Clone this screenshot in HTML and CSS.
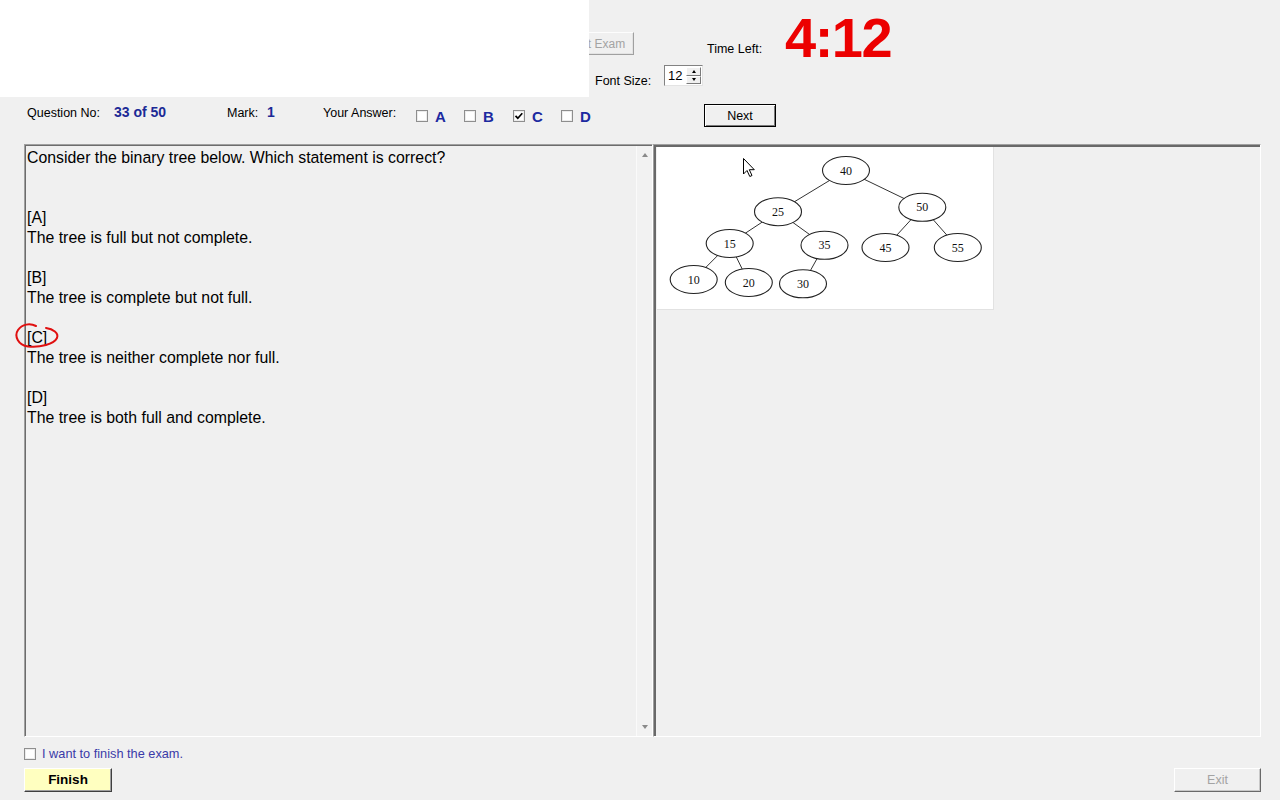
FILE: index.html
```html
<!DOCTYPE html>
<html lang="en">
<head>
<meta charset="utf-8">
<title>Exam</title>
<link rel="stylesheet" href="styles.css">
</head>
<body>
<div class="app">
  <header class="top">
    <div class="blank"></div>
    <div class="col1">
      <div class="clip"><div class="btn start">Start Exam</div></div>
      <div class="fontrow">
        <span class="fs-lbl">Font Size:</span>
        <div class="spin">
          <span class="spin-val">12</span>
          <div class="spin-btns">
            <span class="sbtn"><i class="tri up"></i></span>
            <span class="sbtn"><i class="tri dn"></i></span>
          </div>
        </div>
      </div>
    </div>
    <span class="time-lbl">Time Left:</span>
    <span class="timer">4:12</span>
  </header>

  <div class="info">
    <span class="lbl w-q">Question No:</span>
    <span class="val w-qv">33 of 50</span>
    <span class="lbl w-m">Mark:</span>
    <span class="val w-mv">1</span>
    <span class="lbl w-a">Your Answer:</span>
    <div class="ans w48"><span class="cb"></span><span class="letter">A</span></div>
    <div class="ans w49"><span class="cb"></span><span class="letter">B</span></div>
    <div class="ans w48"><span class="cb"><svg width="10" height="10" viewBox="0 0 10 10"><path d="M1.5 4.8 L3.8 7.2 L8.3 2.2" fill="none" stroke="#000" stroke-width="1.7"/></svg></span><span class="letter">C</span></div>
    <div class="ans w48"><span class="cb"></span><span class="letter">D</span></div>
    <div class="btn next">Next</div>
  </div>

  <main class="main">
    <section class="qpanel">
      <div class="qinner">
        <div class="qtext">
          <div class="line">Consider the binary tree below. Which statement is correct?</div>
          <div class="opt first">
            <div class="line">[A]</div>
            <div class="line">The tree is full but not complete.</div>
          </div>
          <div class="opt">
            <div class="line">[B]</div>
            <div class="line">The tree is complete but not full.</div>
          </div>
          <div class="opt">
            <div class="line"><span class="mark">[C]<svg class="circle" width="52" height="32" viewBox="0 0 52 32"><path d="M24 6 C18 3, 10 4, 6 10 C2 16, 6 25, 16 26.5 C28 28, 42 24, 45 18 C47 13, 41 9, 34 8" fill="none" stroke="#e01010" stroke-width="2" stroke-linecap="round"/></svg></span></div>
            <div class="line">The tree is neither complete nor full.</div>
          </div>
          <div class="opt">
            <div class="line">[D]</div>
            <div class="line">The tree is both full and complete.</div>
          </div>
        </div>
        <div class="vscroll">
          <i class="sarrow up"></i>
          <i class="sarrow dn"></i>
        </div>
      </div>
    </section>
    <section class="rpanel">
      <div class="rinner">
        <div class="figure">
          <svg width="336" height="162" viewBox="0 0 336 162">
            <g stroke="#333" stroke-width="1">
              <line x1="189" y1="23.5" x2="121" y2="64.7"/>
              <line x1="189" y1="23.5" x2="265.3" y2="60.3"/>
              <line x1="121" y1="64.7" x2="72.7" y2="96.5"/>
              <line x1="121" y1="64.7" x2="167.5" y2="98.3"/>
              <line x1="265.3" y1="60.3" x2="228.5" y2="100.5"/>
              <line x1="265.3" y1="60.3" x2="300.8" y2="100.5"/>
              <line x1="72.7" y1="96.5" x2="36.7" y2="132.5"/>
              <line x1="72.7" y1="96.5" x2="91.8" y2="135.5"/>
              <line x1="167.5" y1="98.3" x2="146" y2="136.8"/>
            </g>
            <g fill="#fff" stroke="#222" stroke-width="1.1">
              <ellipse cx="189" cy="23.5" rx="23.5" ry="14"/>
              <ellipse cx="121" cy="64.7" rx="23.5" ry="14"/>
              <ellipse cx="265.3" cy="60.3" rx="23.5" ry="14"/>
              <ellipse cx="72.7" cy="96.5" rx="23.5" ry="14"/>
              <ellipse cx="167.5" cy="98.3" rx="23.5" ry="14"/>
              <ellipse cx="228.5" cy="100.5" rx="23.5" ry="14"/>
              <ellipse cx="300.8" cy="100.5" rx="23.5" ry="14"/>
              <ellipse cx="36.7" cy="132.5" rx="23.5" ry="14"/>
              <ellipse cx="91.8" cy="135.5" rx="23.5" ry="14"/>
              <ellipse cx="146" cy="136.8" rx="23.5" ry="14"/>
            </g>
            <g class="nodes" text-anchor="middle">
              <text x="189" y="27.5">40</text>
              <text x="121" y="68.7">25</text>
              <text x="265.3" y="64.3">50</text>
              <text x="72.7" y="100.5">15</text>
              <text x="167.5" y="102.3">35</text>
              <text x="228.5" y="104.5">45</text>
              <text x="300.8" y="104.5">55</text>
              <text x="36.7" y="136.5">10</text>
              <text x="91.8" y="139.5">20</text>
              <text x="146" y="140.8">30</text>
            </g>
            <path d="M86.5 11.5 L86.5 27 L90 23.5 L92.8 29.5 L95 28.5 L92.3 22.7 L97.3 22.7 Z" fill="#fff" stroke="#000" stroke-width="1" stroke-linejoin="miter"/>
          </svg>
        </div>
      </div>
    </section>
  </main>

  <footer class="bottom">
    <div class="chk-row">
      <span class="cb small"></span>
      <span class="finish-lbl">I want to finish the exam.</span>
    </div>
    <div class="btn-row">
      <div class="btn finish">Finish</div>
      <div class="btn exit">Exit</div>
    </div>
  </footer>
</div>
</body>
</html>
```

FILE: styles.css
```css
* { box-sizing: border-box; }

html, body {
  margin: 0;
  padding: 0;
}

body {
  background: #f0f0f0;
  font-family: "Liberation Sans", Arial, sans-serif;
  font-size: 12.5px;
  color: #000;
  width: 1280px;
  height: 800px;
  overflow: hidden;
}

.app {
  width: 1280px;
  height: 800px;
}

/* ---------- top ---------- */
.top {
  display: flex;
  align-items: flex-start;
  height: 97px;
}

.blank {
  width: 589px;
  height: 97px;
  background: #fff;
  flex-shrink: 0;
}

.col1 {
  width: 114px;
  flex-shrink: 0;
  display: flex;
  flex-direction: column;
  align-items: flex-start;
  padding-top: 32px;
}

.clip {
  width: 45px;
  height: 23px;
  overflow: hidden;
  display: flex;
  justify-content: flex-end;
}

.btn {
  display: flex;
  align-items: center;
  justify-content: center;
  flex-shrink: 0;
  line-height: 14px;
}

.start {
  width: 77px;
  height: 23px;
  color: #a3a3a3;
  font-size: 12px;
  background: #f0f0f0;
  border: 1px solid;
  border-color: #fdfdfd #a0a0a0 #a0a0a0 #fdfdfd;
  box-shadow: inset -1px -1px 0 #e3e3e3;
}

.fontrow {
  display: flex;
  align-items: flex-end;
  margin-top: 10px;
  margin-left: 6px;
}

.fs-lbl {
  width: 69px;
  line-height: 14px;
  margin-bottom: -2px;
}

.spin {
  width: 39px;
  height: 21px;
  background: #fff;
  border: 1px solid;
  border-color: #828282 #e3e3e3 #e3e3e3 #828282;
  display: flex;
  align-items: center;
  justify-content: space-between;
  padding: 1px 1px 1px 3px;
}

.spin-val {
  line-height: 14px;
  font-size: 13px;
}

.spin-btns {
  display: flex;
  flex-direction: column;
  width: 15px;
  height: 17px;
}

.sbtn {
  flex: 1;
  background: #f0f0f0;
  border: 1px solid;
  border-color: #fff #7a7a7a #7a7a7a #fff;
  display: flex;
  align-items: center;
  justify-content: center;
}

.tri {
  display: block;
  width: 0;
  height: 0;
  border-left: 2.5px solid transparent;
  border-right: 2.5px solid transparent;
}
.tri.up { border-bottom: 3px solid #000; }
.tri.dn { border-top: 3px solid #000; }

.time-lbl {
  margin-top: 42px;
  margin-left: 4px;
  width: 56px;
  line-height: 14px;
  white-space: nowrap;
}

.timer {
  margin-top: 10px;
  margin-left: 22px;
  font-size: 56px;
  line-height: 56px;
  font-weight: bold;
  letter-spacing: -1.5px;
  color: #ec0000;
}

/* ---------- info row ---------- */
.info {
  display: flex;
  align-items: flex-start;
  height: 47px;
  padding-left: 27px;
}

.lbl {
  margin-top: 9px;
  line-height: 14px;
  white-space: nowrap;
  flex-shrink: 0;
}

.val {
  margin-top: 8px;
  font-size: 14px;
  line-height: 14px;
  font-weight: bold;
  color: #1c2a96;
  white-space: nowrap;
  flex-shrink: 0;
}

.w-q { width: 87px; }
.w-qv { width: 113px; }
.w-m { width: 40px; }
.w-mv { width: 56px; }
.w-a { width: 93px; }

.ans {
  display: flex;
  align-items: flex-start;
  flex-shrink: 0;
}
.w48 { width: 48px; }
.w49 { width: 49px; }

.cb {
  width: 12px;
  height: 12px;
  margin-top: 13px;
  background: #fff;
  border: 1px solid #8e8e8e;
  box-shadow: inset 0 0 0 1px #ececec;
  display: flex;
  align-items: center;
  justify-content: center;
  flex-shrink: 0;
}

.letter {
  margin-top: 12px;
  margin-left: 7px;
  font-size: 15px;
  line-height: 15px;
  font-weight: bold;
  color: #1c2aa0;
}

.next {
  margin-top: 7px;
  margin-left: 95px;
  width: 72px;
  height: 23px;
  border: 1px solid #000;
  background: #f0f0f0;
  box-shadow: inset 1px 1px 0 #fff, inset -1px -1px 0 #7a7a7a;
}

/* ---------- main panels ---------- */
.main {
  display: flex;
  margin-left: 24px;
  height: 593px;
}

.qpanel {
  width: 629px;
  height: 100%;
  border: 1px solid;
  border-color: #a0a0a0 #fff #fff #a0a0a0;
}

.qinner {
  display: flex;
  height: 100%;
  border-top: 1px solid #6d6d6d;
  border-left: 1px solid #6d6d6d;
}

.qtext {
  flex: 1;
  padding: 2px 0 0 1px;
  font-size: 15.85px;
  line-height: 20px;
}

.line {
  height: 20px;
  white-space: nowrap;
}

.opt { margin-top: 20px; }
.opt.first { margin-top: 40px; }

.mark {
  position: relative;
}

.circle {
  position: absolute;
  left: -15px;
  top: -8.6px;
  pointer-events: none;
}

.vscroll {
  width: 16px;
  border-left: 1px solid #fafafa;
  background: #f2f2f2;
  display: flex;
  flex-direction: column;
  justify-content: space-between;
  align-items: center;
  padding: 7px 0 7px;
}

.sarrow {
  display: block;
  width: 0;
  height: 0;
  border-left: 3.5px solid transparent;
  border-right: 3.5px solid transparent;
}
.sarrow.up { border-bottom: 4px solid #8a8a8a; }
.sarrow.dn { border-top: 4px solid #8a8a8a; }

.rpanel {
  width: 608px;
  height: 100%;
  border: 1px solid;
  border-color: #a0a0a0 #fff #fff #a0a0a0;
}

.rinner {
  height: 100%;
  border-top: 2px solid #696969;
  border-left: 2px solid #696969;
  padding-left: 1px;
}

.figure {
  width: 337px;
  height: 163px;
  background: #fff;
  border-right: 1px solid #e2e2e2;
  border-bottom: 1px solid #e2e2e2;
}

.figure svg { display: block; }

.nodes {
  font-family: "Liberation Serif", "Times New Roman", serif;
  font-size: 12px;
  fill: #111;
}

/* ---------- bottom ---------- */
.bottom {
  padding: 11px 0 0 24px;
}

.chk-row {
  display: flex;
  align-items: center;
  height: 12px;
}

.cb.small {
  margin-top: 0;
}

.finish-lbl {
  margin-left: 6px;
  font-size: 12.75px;
  line-height: 14px;
  color: #3a3aa8;
  white-space: nowrap;
}

.btn-row {
  display: flex;
  justify-content: space-between;
  width: 1237px;
  margin-top: 8px;
}

.finish {
  width: 88px;
  height: 24px;
  background: #ffffc0;
  font-weight: bold;
  font-size: 13.5px;
  border: 1px solid;
  border-color: #fff #404040 #404040 #fff;
  box-shadow: inset -1px -1px 0 #a0a0a0;
}

.exit {
  width: 87px;
  height: 24px;
  background: #f0f0f0;
  color: #a3a3a3;
  border: 1px solid;
  border-color: #fff #696969 #696969 #fff;
  box-shadow: inset -1px -1px 0 #c8c8c8;
}
```
